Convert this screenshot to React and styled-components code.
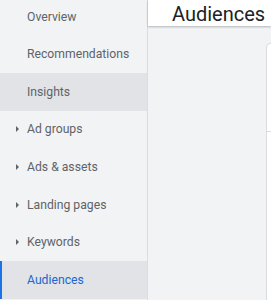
import styled, { createGlobalStyle } from 'styled-components';

const GlobalStyle = createGlobalStyle`
  html, body {
    margin: 0;
    padding: 0;
    background: #f1f3f4;
    font-family: Roboto, "Liberation Sans", sans-serif;
    overflow: hidden;
  }
`;

const Layout = styled.div`
  display: flex;
  width: 271px;
  height: 300px;
  overflow: hidden;
`;

const Sidebar = styled.nav`
  flex: 0 0 147px;
  background: #f1f3f4;
  border-right: 1px solid #dadce0;
  overflow: hidden;
`;

const NavList = styled.ul`
  list-style: none;
  margin: -2px 0 0;
  padding: 0;
`;

const NavItem = styled.li`
  position: relative;
  display: flex;
  align-items: center;
  height: 37.57px;
  box-sizing: border-box;
  padding-left: ${(p) => (p.$active ? '25px' : '27px')};
  font-size: 12.2px;
  color: ${(p) => (p.$active ? '#1967d2' : '#5f6368')};
  background: ${(p) => (p.$active || p.$hover ? '#e1e3e6' : 'transparent')};
  border-left: ${(p) => (p.$active ? '2px solid #1a73e8' : '0')};
  white-space: nowrap;
`;

const Caret = styled.span`
  position: absolute;
  left: 16px;
  top: 50%;
  margin-top: -3px;
  width: 0;
  height: 0;
  border-top: 3px solid transparent;
  border-bottom: 3px solid transparent;
  border-left: 3px solid #5f6368;
`;

const Main = styled.main`
  flex: 1;
  display: flex;
  flex-direction: column;
  min-width: 0;
`;

const Header = styled.header`
  height: 38px;
  box-sizing: border-box;
  background: #fff;
  box-shadow: 0 1px 2px rgba(60, 64, 67, 0.35);
  display: flex;
  align-items: flex-start;
  padding: 2.5px 0 0 24px;
  position: relative;
  z-index: 1;
`;

const Title = styled.h1`
  margin: 0;
  font-size: 20px;
  line-height: 23px;
  font-weight: 400;
  color: #202124;
  white-space: nowrap;
`;

const Content = styled.div`
  flex: 1;
  padding: 17px 0 0 118px;
`;

const Card = styled.div`
  height: 260px;
  width: 200px;
  background: #fff;
  border: 1px solid #dadce0;
  border-radius: 4px;
  box-sizing: border-box;
`;

const CardRow = styled.div`
  height: 87px;
  border-bottom: 1px solid #dadce0;
`;

const items = [
  { label: 'Overview' },
  { label: 'Recommendations' },
  { label: 'Insights', hover: true },
  { label: 'Ad groups', caret: true },
  { label: 'Ads & assets', caret: true },
  { label: 'Landing pages', caret: true },
  { label: 'Keywords', caret: true },
  { label: 'Audiences', active: true },
];

export default function App() {
  return (
    <>
      <GlobalStyle />
      <Layout>
        <Sidebar>
          <NavList>
            {items.map((it) => (
              <NavItem key={it.label} $active={it.active} $hover={it.hover}>
                {it.caret && <Caret />}
                {it.label}
              </NavItem>
            ))}
          </NavList>
        </Sidebar>
        <Main>
          <Header>
            <Title>Audiences</Title>
          </Header>
          <Content>
            <Card>
              <CardRow />
            </Card>
          </Content>
        </Main>
      </Layout>
    </>
  );
}
